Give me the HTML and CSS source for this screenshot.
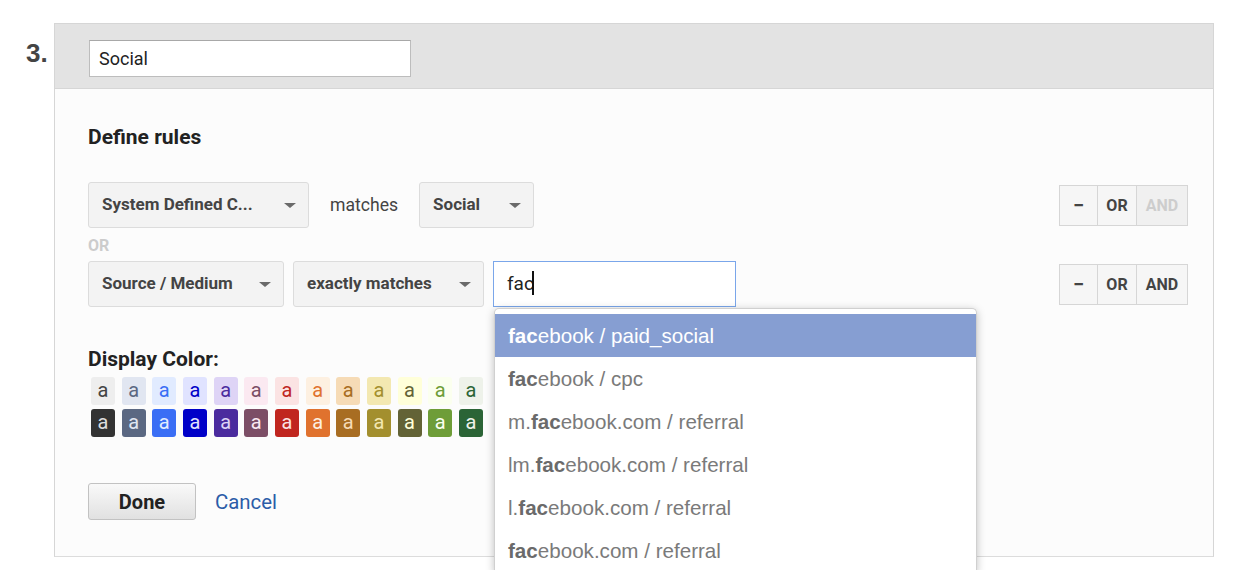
FILE: index.html
```html
<!DOCTYPE html>
<html lang="en">
<head>
	<meta charset="UTF-8">
	<title>Channel grouping</title>
	<link rel="stylesheet" href="styles.css">
</head>
<body>
	<div id="page">
		<div class="num">3.</div>
		<div id="panel">
			<div class="head">
				<div class="nameBox">Social</div>
			</div>
			<div class="body">
				<h3 class="title">Define rules</h3>
				<div class="rules">
					<div class="row">
						<div class="sel selWide">System Defined C...<i class="arrow"></i></div>
						<span class="word">matches</span>
						<div class="sel selShort">Social<i class="arrow"></i></div>
						<div class="ops">
							<span class="op opMinus">&minus;</span>
							<span class="op opOr">OR</span>
							<span class="op opAnd off">AND</span>
						</div>
					</div>
					<div class="orLabel">OR</div>
					<div class="row">
						<div class="sel selSource">Source / Medium<i class="arrow"></i></div>
						<div class="sel selMatch">exactly matches<i class="arrow"></i></div>
						<div class="field">
							<div class="valueBox">fac<span class="caret"></span></div>
							<ul class="suggest">
								<li class="on"><b>fac</b>ebook / paid_social</li>
								<li><b>fac</b>ebook / cpc</li>
								<li>m.<b>fac</b>ebook.com / referral</li>
								<li>lm.<b>fac</b>ebook.com / referral</li>
								<li>l.<b>fac</b>ebook.com / referral</li>
								<li><b>fac</b>ebook.com / referral</li>
							</ul>
						</div>
						<div class="ops">
							<span class="op opMinus">&minus;</span>
							<span class="op opOr">OR</span>
							<span class="op opAnd">AND</span>
						</div>
					</div>
				</div>
				<h3 class="title colorTitle">Display Color:</h3>
				<div class="swatches">
					<span class="sw l1">a</span><span class="sw l2">a</span><span class="sw l3">a</span><span class="sw l4">a</span><span class="sw l5">a</span><span class="sw l6">a</span><span class="sw l7">a</span><span class="sw l8">a</span><span class="sw l9">a</span><span class="sw l10">a</span><span class="sw l11">a</span><span class="sw l12">a</span><span class="sw l13">a</span>
				</div>
				<div class="swatches">
					<span class="sw d1">a</span><span class="sw d2">a</span><span class="sw d3">a</span><span class="sw d4">a</span><span class="sw d5">a</span><span class="sw d6">a</span><span class="sw d7">a</span><span class="sw d8">a</span><span class="sw d9">a</span><span class="sw d10">a</span><span class="sw d11">a</span><span class="sw d12">a</span><span class="sw d13">a</span>
				</div>
				<div class="actions">
					<button class="done">Done</button>
					<a href="javascript:void(0);" class="cancel">Cancel</a>
				</div>
			</div>
		</div>
	</div>
</body>
</html>
```

FILE: styles.css
```css
html, body{
	overflow: hidden;
}
body{
	margin: 0;
	min-height: 570px;
	background: #fff;
	font-family: Roboto, "Liberation Sans", Arial, sans-serif;
	color: #333;
}
#page{
	display: flex;
	align-items: flex-start;
	min-height: 570px;
	box-sizing: border-box;
	padding: 23px 0 0 26px;
}
.num{
	width: 28px;
	padding-top: 15px;
	font-size: 26px;
	font-weight: bold;
	color: #444;
	font-family: "Liberation Sans", Arial, sans-serif;
}
#panel{
	width: 1158px;
	border: 1px solid #d6d6d6;
	border-bottom-color: #dcdcdc;
	background: #fcfcfc;
}
.head{
	height: 65px;
	background: #e3e3e3;
	border-bottom: 1px solid #d6d6d6;
	padding: 16px 0 0 34px;
	box-sizing: border-box;
}
.nameBox{
	width: 322px;
	height: 37px;
	box-sizing: border-box;
	background: #fff;
	border: 1px solid #bdbdbd;
	border-top-color: #a8a8a8;
	padding: 0 9px;
	line-height: 35px;
	font-size: 18px;
	color: #222;
}
.body{
	padding: 36px 25px 36px 33px;
}
.title{
	margin: 0;
	font-size: 21px;
	line-height: 24px;
	font-weight: bold;
	color: #222;
}
.rules{
	margin-top: 33px;
}
.row{
	display: flex;
	align-items: center;
	height: 46px;
}
.sel{
	position: relative;
	height: 46px;
	box-sizing: border-box;
	background: #f3f3f3;
	border: 1px solid #dcdcdc;
	border-radius: 3px;
	padding-left: 13px;
	font-size: 17px;
	font-weight: bold;
	line-height: 42px;
	color: #444;
	margin-right: 9px;
}
.arrow{
	position: absolute;
	right: 12px;
	top: 20px;
	width: 0;
	height: 0;
	border-left: 6px solid transparent;
	border-right: 6px solid transparent;
	border-top: 5px solid #6a6a6a;
}
.selWide{ width: 221px; margin-right: 0; }
.selShort{ width: 115px; }
.selSource{ width: 196px; }
.selMatch{ width: 191px; }
.word{
	padding: 0 21px 0 21px;
	font-size: 17.6px;
	color: #444;
}
.ops{
	display: flex;
	margin-left: auto;
	height: 39px;
	border: 1px solid #d6d6d6;
	background: #f6f6f6;
}
.op{
	display: flex;
	align-items: center;
	justify-content: center;
	font-size: 16px;
	font-weight: bold;
	color: #444;
	border-left: 1px solid #d6d6d6;
}
.opMinus{ width: 37px; border-left: 0; font-size: 20px; }
.opOr{ width: 38px; }
.opAnd{ width: 50px; }
.opAnd.off{
	color: #cdcdcd;
	background: #f0f0f0;
}
.orLabel{
	height: 33px;
	line-height: 35px;
	font-size: 16px;
	font-weight: bold;
	color: #cccccc;
}
.field{
	position: relative;
	margin-right: 0;
}
.valueBox{
	width: 243px;
	height: 46px;
	box-sizing: border-box;
	background: #fff;
	border: 1px solid #7aa6ea;
	padding-left: 13px;
	font-size: 19px;
	line-height: 44px;
	color: #222;
}
.caret{
	display: inline-block;
	width: 2px;
	height: 24px;
	background: #111;
	vertical-align: -5px;
	margin-left: -2px;
}
.suggest{
	position: absolute;
	left: 1px;
	top: 47px;
	width: 481px;
	margin: 0;
	padding: 5px 0 0;
	list-style: none;
	background: #fff;
	border: 1px solid #d0d0d0;
	border-bottom: 0;
	border-radius: 5px 5px 0 0;
	box-shadow: 0 2px 8px rgba(0,0,0,0.25);
	z-index: 5;
}
.suggest li{
	height: 43px;
	line-height: 44px;
	padding-left: 13px;
	font-family: "Liberation Sans", Arial, sans-serif;
	font-size: 20.6px;
	color: #7a7a7a;
}
.suggest li b{
	color: #6a6a6a;
}
.suggest li.on{
	background: #869ed2;
	color: #fff;
}
.suggest li.on b{
	color: #fff;
}
.colorTitle{
	margin-top: 40px;
}
.swatches{
	display: flex;
	gap: 6.67px;
	margin-top: 4px;
	padding-left: 3px;
}
.colorTitle + .swatches{
	margin-top: 6px;
}
.sw{
	width: 24px;
	height: 28px;
	border-radius: 3px;
	text-align: center;
	line-height: 26px;
	font-size: 20px;
}
.l1{ background: #eeeeee; color: #444; }
.l2{ background: #e1e6f1; color: #5b6882; }
.l3{ background: #e1ebff; color: #3a6ef5; }
.l4{ background: #e0e3ff; color: #0000c8; }
.l5{ background: #ded4f6; color: #4b2b9e; }
.l6{ background: #fbe9f1; color: #7c4e66; }
.l7{ background: #fbe3e3; color: #c0261f; }
.l8{ background: #fdf0e1; color: #e0722e; }
.l9{ background: #f6dbb6; color: #a86d22; }
.l10{ background: #f3e8b1; color: #a38f2e; }
.l11{ background: #ffffd9; color: #636336; }
.l12{ background: #fbffef; color: #6e9d38; }
.l13{ background: #eef2ea; color: #2b6436; }
.d1{ background: #333333; color: #ddd; }
.d2{ background: #5b6882; color: #e1e6f1; }
.d3{ background: #3a6ef5; color: #e1ebff; }
.d4{ background: #0000c8; color: #e0e3ff; }
.d5{ background: #4b2b9e; color: #ded4f6; }
.d6{ background: #7c4e66; color: #fbe9f1; }
.d7{ background: #c0261f; color: #fbe3e3; }
.d8{ background: #e0722e; color: #fdf0e1; }
.d9{ background: #a86d22; color: #f6dbb6; }
.d10{ background: #a38f2e; color: #f3e8b1; }
.d11{ background: #636336; color: #ffffd9; }
.d12{ background: #6e9d38; color: #fbffef; }
.d13{ background: #2b6436; color: #eef2ea; }
.actions{
	display: flex;
	align-items: center;
	margin-top: 46px;
}
.done{
	width: 108px;
	height: 37px;
	border: 1px solid #c2c2c2;
	border-radius: 3px;
	background: linear-gradient(#f9f9f9, #e1e1e1);
	font-family: Roboto, "Liberation Sans", Arial, sans-serif;
	font-size: 20px;
	font-weight: bold;
	color: #222;
	padding: 0;
}
.cancel{
	margin-left: 19px;
	font-size: 20.4px;
	color: #2b5ca8;
	text-decoration: none;
}
```
